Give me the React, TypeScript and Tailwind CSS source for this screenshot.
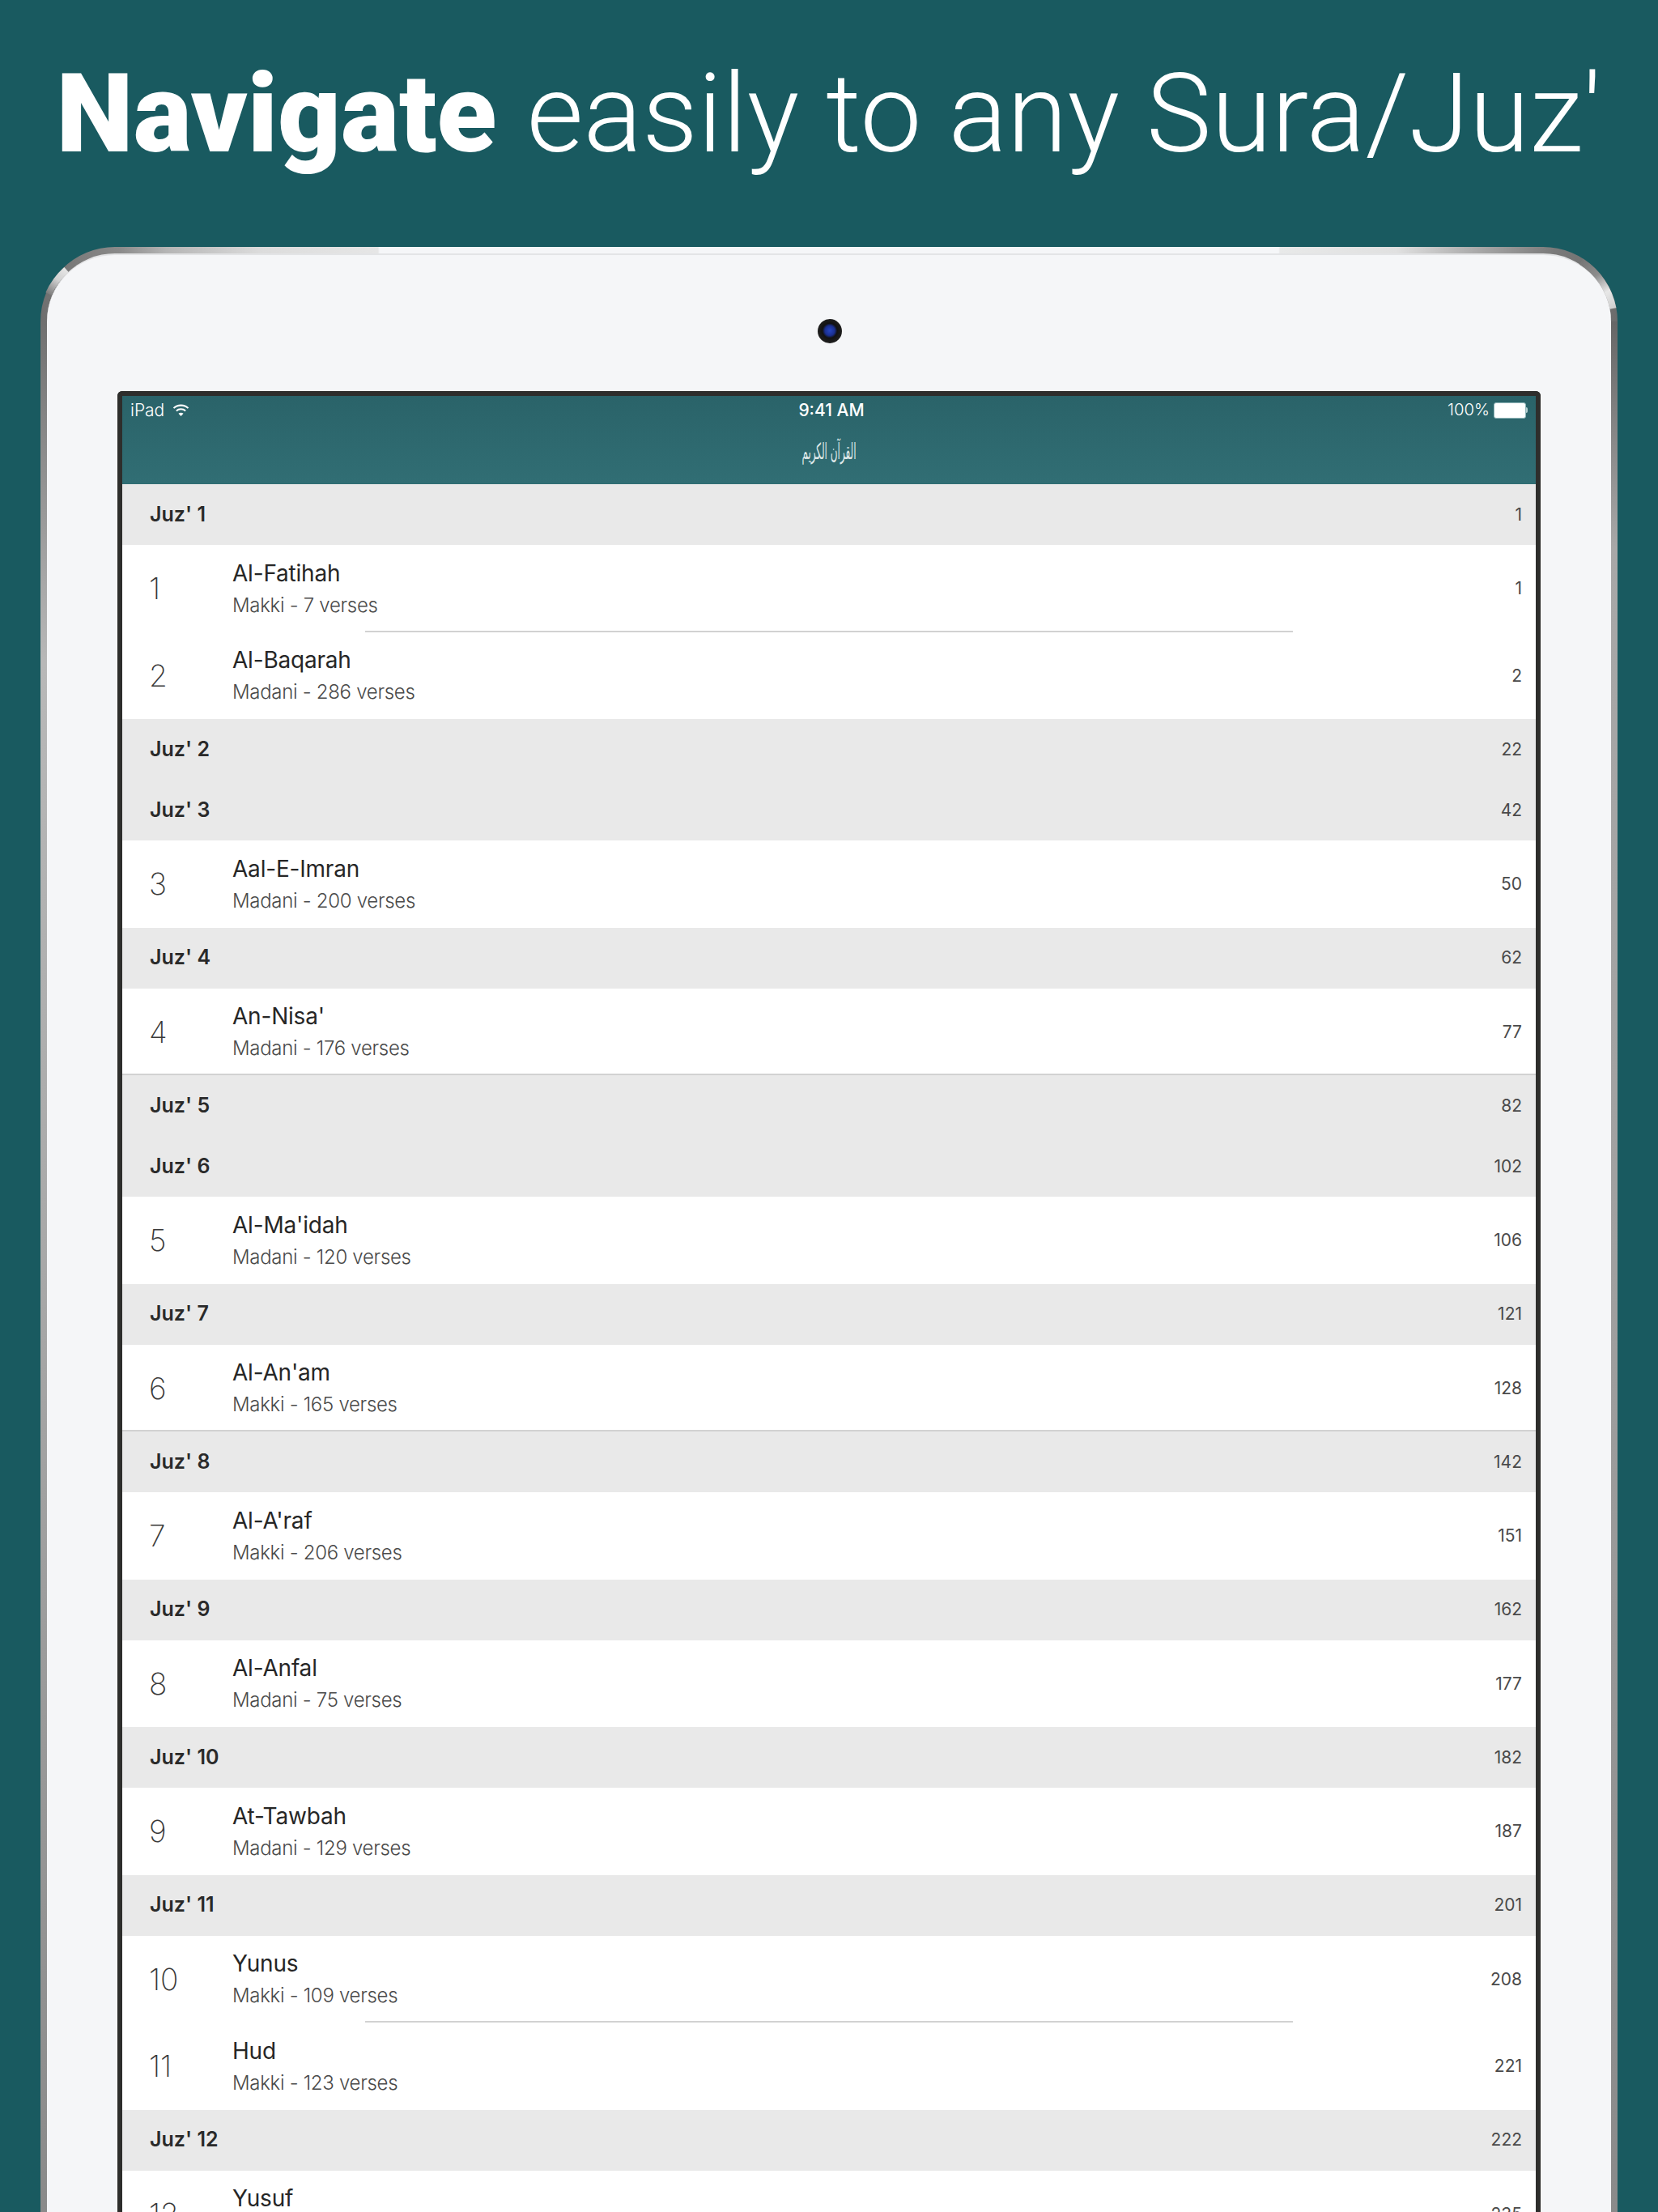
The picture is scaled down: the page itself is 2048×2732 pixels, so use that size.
const SANS = 'font-["Inter","Liberation_Sans",sans-serif]';

type Item =
  | { kind: 'juz'; label: string; page: number }
  | { kind: 'sura'; num: number; name: string; info: string; page: number; rule?: 'inset' | 'full' };

const items: Item[] = [
  { kind: 'juz', label: "Juz' 1", page: 1 },
  { kind: 'sura', num: 1, name: 'Al-Fatihah', info: 'Makki - 7 verses', page: 1, rule: 'inset' },
  { kind: 'sura', num: 2, name: 'Al-Baqarah', info: 'Madani - 286 verses', page: 2 },
  { kind: 'juz', label: "Juz' 2", page: 22 },
  { kind: 'juz', label: "Juz' 3", page: 42 },
  { kind: 'sura', num: 3, name: 'Aal-E-Imran', info: 'Madani - 200 verses', page: 50 },
  { kind: 'juz', label: "Juz' 4", page: 62 },
  { kind: 'sura', num: 4, name: "An-Nisa'", info: 'Madani - 176 verses', page: 77, rule: 'full' },
  { kind: 'juz', label: "Juz' 5", page: 82 },
  { kind: 'juz', label: "Juz' 6", page: 102 },
  { kind: 'sura', num: 5, name: "Al-Ma'idah", info: 'Madani - 120 verses', page: 106 },
  { kind: 'juz', label: "Juz' 7", page: 121 },
  { kind: 'sura', num: 6, name: "Al-An'am", info: 'Makki - 165 verses', page: 128, rule: 'full' },
  { kind: 'juz', label: "Juz' 8", page: 142 },
  { kind: 'sura', num: 7, name: "Al-A'raf", info: 'Makki - 206 verses', page: 151 },
  { kind: 'juz', label: "Juz' 9", page: 162 },
  { kind: 'sura', num: 8, name: 'Al-Anfal', info: 'Madani - 75 verses', page: 177 },
  { kind: 'juz', label: "Juz' 10", page: 182 },
  { kind: 'sura', num: 9, name: 'At-Tawbah', info: 'Madani - 129 verses', page: 187 },
  { kind: 'juz', label: "Juz' 11", page: 201 },
  { kind: 'sura', num: 10, name: 'Yunus', info: 'Makki - 109 verses', page: 208, rule: 'inset' },
  { kind: 'sura', num: 11, name: 'Hud', info: 'Makki - 123 verses', page: 221 },
  { kind: 'juz', label: "Juz' 12", page: 222 },
  { kind: 'sura', num: 12, name: 'Yusuf', info: 'Makki - 111 verses', page: 235 },
];

function WifiIcon() {
  return (
    <svg width="21" height="17" viewBox="0 0 22 18" fill="none" stroke="white">
      <path d="M1.5 6.5C6.5 1.5 15.5 1.5 20.5 6.5" strokeWidth="2.2" />
      <path d="M5 10C8.3 7 13.7 7 17 10" strokeWidth="2.2" />
      <path d="M11 17L7.8 13.4C9.6 12 12.4 12 14.2 13.4Z" fill="white" stroke="none" />
    </svg>
  );
}

function Battery() {
  return (
    <div className="flex items-center">
      <div className="w-[40px] h-[20px] rounded-[3px] border border-[#8fb5b8] bg-white" />
      <div className="w-[2px] h-[7px] bg-[#b5cfd1] rounded-r-sm" />
    </div>
  );
}

// the bright glints on the metal band, top corners
function CornerGlints() {
  return (
    <>
      <svg className="absolute left-0 top-0" width="100" height="100" viewBox="0 0 100 100" fill="none">
        <defs>
          <linearGradient id="glintLeft" gradientUnits="userSpaceOnUse" x1="32" y1="28" x2="10" y2="58">
            <stop offset="0" stopColor="#e6e6e6" />
            <stop offset="0.45" stopColor="#d0d0d0" />
            <stop offset="1" stopColor="#7c7c7c" />
          </linearGradient>
        </defs>
        <path d="M32 28A88 88 0 0 0 10 58" stroke="url(#glintLeft)" strokeWidth="8" />
      </svg>
      <svg className="absolute right-0 top-0" width="100" height="100" viewBox="0 0 100 100" fill="none">
        <defs>
          <linearGradient id="glintRight" gradientUnits="userSpaceOnUse" x1="94" y1="76" x2="55" y2="18">
            <stop offset="0" stopColor="#cfcfcf" />
            <stop offset="0.3" stopColor="#e8e8e8" />
            <stop offset="0.65" stopColor="#8c8c8c" />
            <stop offset="1" stopColor="#777777" />
          </linearGradient>
        </defs>
        <path d="M94.5 76A88 88 0 0 0 55 18" stroke="url(#glintRight)" strokeWidth="8" />
      </svg>
    </>
  );
}

function JuzRow({ label, page }: { label: string; page: number }) {
  return (
    <div className="h-[75px] bg-[#e9e9e9] flex items-center justify-between pl-[34px] pr-[17px]">
      <span className="text-[25px] font-semibold text-[#2a2a2a]">{label}</span>
      <span className="text-[21px] text-[#4a4a4a]">{page}</span>
    </div>
  );
}

function SuraRow({ item }: { item: Extract<Item, { kind: 'sura' }> }) {
  return (
    <div className="relative h-[107.5px] bg-white flex items-center pl-[33px] pr-[17px]">
      <span className="w-[103px] text-[37px] font-extralight text-[#3a3a3a]">{item.num}</span>
      <div className="flex-1 flex flex-col gap-[7px] -mt-px">
        <span className="text-[28px] leading-[36px] tracking-[-0.2px] text-[#262626]">{item.name}</span>
        <span className="text-[24px] leading-[30px] tracking-[-0.3px] font-light text-[#4a4a4a]">{item.info}</span>
      </div>
      <span className="text-[21px] text-[#4a4a4a]">{item.page}</span>
      {item.rule === 'inset' && <div className="absolute bottom-0 left-[300px] w-[1146px] h-[2px] bg-[#d2d2d2]" />}
      {item.rule === 'full' && <div className="absolute bottom-0 left-0 right-0 h-[2px] bg-[#d2d2d2]" />}
    </div>
  );
}

export default function App() {
  return (
    <div className={`w-[2048px] h-[2732px] overflow-hidden bg-[#195a60] flex flex-col ${SANS}`}>
      {/* Headline */}
      <h1 className="h-[305px] shrink-0 pt-[56px] text-center text-[135.5px] leading-[170px] text-white font-['Roboto',sans-serif] font-[280] whitespace-nowrap">
        <span className="font-black mr-[4px]">Navigate</span> easily to any Sura/Juz'
      </h1>

      {/* Device */}
      <div className="relative flex-1 min-h-0 mx-[50px] px-[8px] pt-[8px] rounded-t-[92px] bg-[linear-gradient(90deg,#6f6f6f_0%,#8a8a8a_5%,#b5b5b5_8%,#dcdcdc_14%,#e6e6e6_21.4%,#f5f6f8_21.5%,#f5f6f8_78.5%,#e8e9e9_78.6%,#e0e0e0_86%,#a5a5a5_91.5%,#7a7a7a_96%,#6c6c6c_100%)]">
        <div className="absolute left-0 top-[92px] bottom-0 w-[8px] bg-[linear-gradient(180deg,#707070_0%,#b8b8b8_18%,#a8a8a8_50%,#8a8a8a_100%)]" />
        <div className="absolute right-0 top-[92px] bottom-0 w-[8px] bg-[linear-gradient(180deg,#666666_0%,#a8a8a8_12%,#a0a0a0_50%,#8a8a8a_100%)]" />
        <div className="h-full rounded-t-[84px] border-t-2 border-[#e3e4e6] bg-[#f5f6f8] flex flex-col items-center px-[87px] pt-[168px]">
          <CornerGlints />
          {/* Camera */}
          <div className="absolute top-[89px] left-1/2 -translate-x-1/2 ml-px w-[30px] h-[30px] rounded-full bg-[radial-gradient(circle_at_50%_48%,#2746c0_0%,#1a2f90_28%,#121212_42%,#222222_75%,#777777_100%)]" />

          {/* Screen */}
          <div className="w-full flex-1 min-h-0 overflow-hidden rounded-t-[6px] border-x-[6px] border-t-[6px] border-[#2e2e2c] flex flex-col">
            <div className="relative h-[109px] shrink-0 bg-[linear-gradient(180deg,#2a6369,#316e74)] text-white">
              <div className="flex items-center justify-between h-[35px] pl-[10px] pr-[10px]">
                <div className="flex items-center gap-[10px] text-[21px] font-light">
                  <span>iPad</span>
                  <WifiIcon />
                </div>
                <span className="absolute left-[6px] right-0 text-center text-[21px] font-medium">9:41 AM</span>
                <div className="flex items-center gap-[5px] text-[20.3px] font-light">
                  <span>100%</span>
                  <Battery />
                </div>
              </div>
              <div className="h-[68px] flex items-center justify-center">
                <span className="text-[12px] leading-none scale-y-[2.3] font-['DejaVu_Sans',sans-serif] text-[#dfe9e9]">القرآن الكريم</span>
              </div>
            </div>
            <div className="flex-1 min-h-0 overflow-hidden">
              {items.map((item) =>
                item.kind === 'juz' ? (
                  <JuzRow key={item.label} label={item.label} page={item.page} />
                ) : (
                  <SuraRow key={item.num} item={item} />
                ),
              )}
            </div>
          </div>
        </div>
      </div>
    </div>
  );
}
